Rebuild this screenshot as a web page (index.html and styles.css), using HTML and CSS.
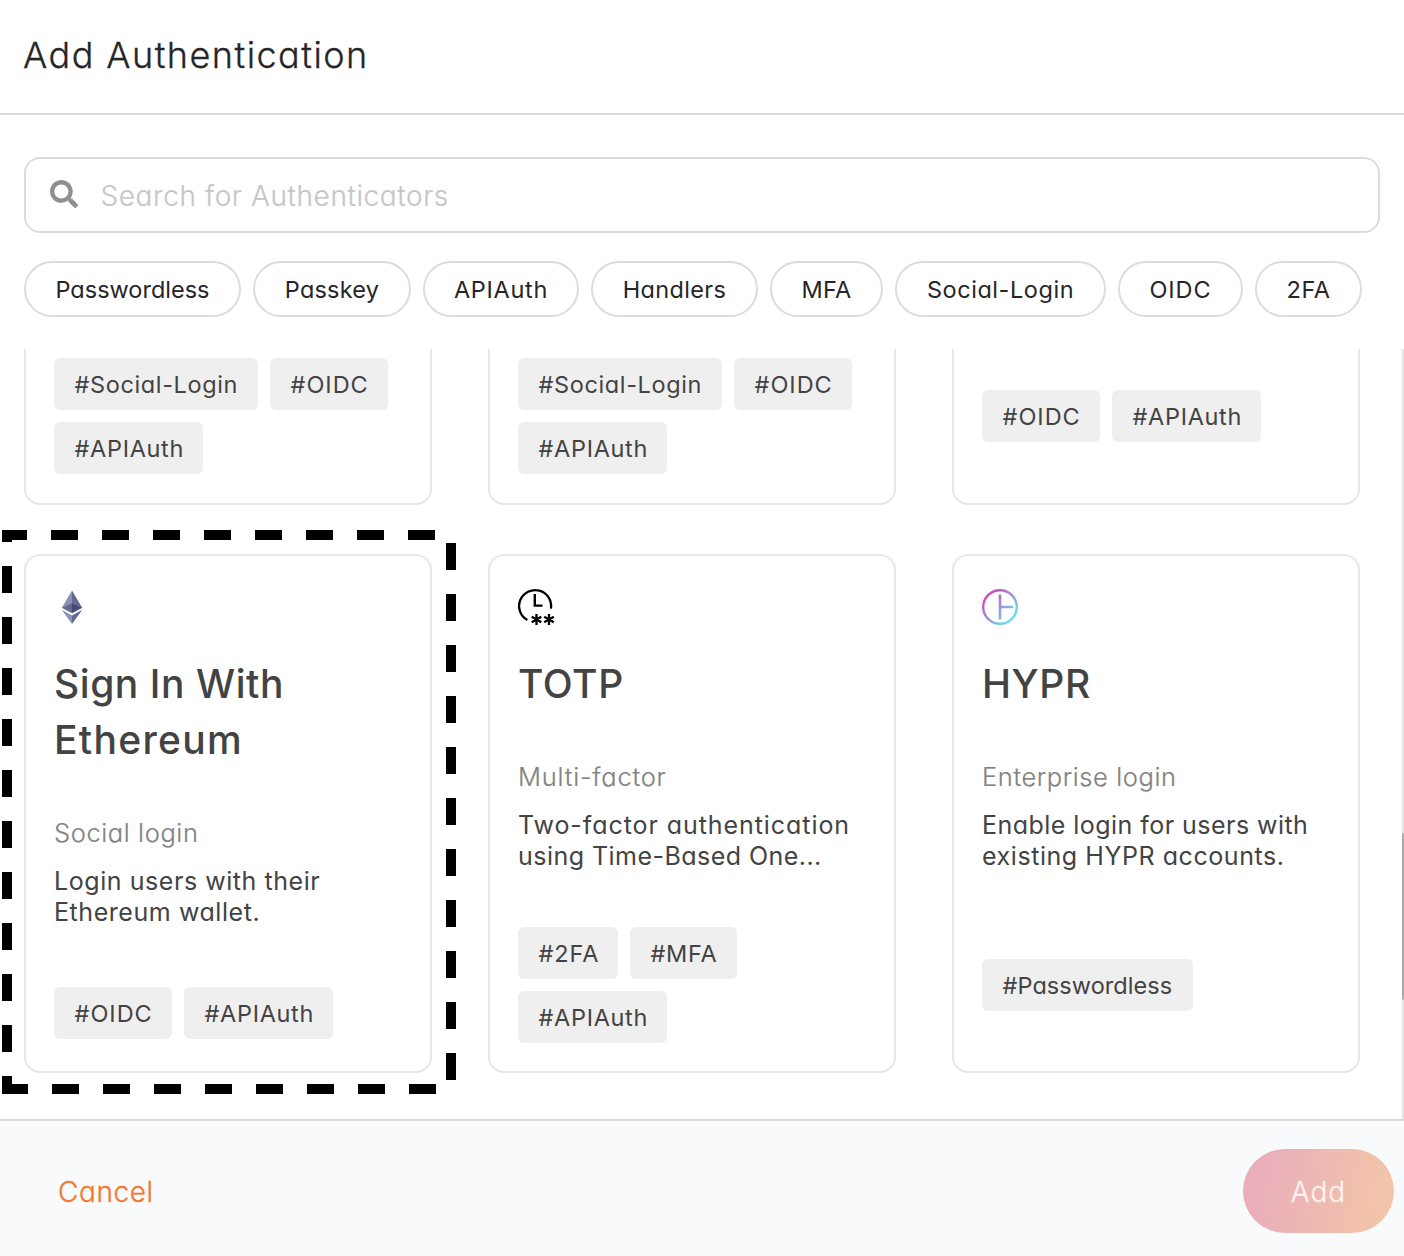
FILE: index.html
```
<!DOCTYPE html>
<html lang="en">
<head>
<meta charset="utf-8">
<title>Add Authentication</title>
<link rel="stylesheet" href="styles.css">
</head>
<body>
<div class="dialog">
  <header class="header"><h1 class="header-title">Add Authentication</h1></header>

  <div class="filters">
    <div class="search">
      <svg class="search-icon" viewBox="0 0 512 512"><path fill="#8f8f8f" d="M505 442.7L405.3 343c-4.5-4.5-10.6-7-17-7H372c27.6-35.3 44-79.7 44-128C416 93.1 322.9 0 208 0S0 93.1 0 208s93.1 208 208 208c48.3 0 92.7-16.4 128-44v16.3c0 6.4 2.5 12.5 7 17l99.7 99.7c9.4 9.4 24.6 9.4 33.9 0l28.3-28.3c9.4-9.4 9.4-24.6.1-34zM208 336c-70.7 0-128-57.2-128-128 0-70.7 57.2-128 128-128 70.7 0 128 57.2 128 128 0 70.7-57.2 128-128 128z"/></svg>
      <span class="search-placeholder">Search for Authenticators</span>
    </div>
    <div class="pills">
      <span class="pill pill-passwordless">Passwordless</span>
      <span class="pill pill-passkey">Passkey</span>
      <span class="pill pill-apiauth">APIAuth</span>
      <span class="pill pill-handlers">Handlers</span>
      <span class="pill pill-mfa">MFA</span>
      <span class="pill pill-social">Social-Login</span>
      <span class="pill pill-oidc">OIDC</span>
      <span class="pill pill-2fa">2FA</span>
    </div>
  </div>

  <main class="list">
    <div class="grid">
      <article class="card card-cut">
        <div class="tags">
          <span class="tag tag-social">#Social-Login</span>
          <span class="tag tag-oidc">#OIDC</span>
          <span class="tag tag-apiauth">#APIAuth</span>
        </div>
      </article>
      <article class="card card-cut">
        <div class="tags">
          <span class="tag tag-social">#Social-Login</span>
          <span class="tag tag-oidc">#OIDC</span>
          <span class="tag tag-apiauth">#APIAuth</span>
        </div>
      </article>
      <article class="card card-cut">
        <div class="tags">
          <span class="tag tag-oidc">#OIDC</span>
          <span class="tag tag-apiauth">#APIAuth</span>
        </div>
      </article>

      <article class="card card-highlighted">
        <svg class="highlight" viewBox="0 0 454 564" fill="none" stroke="#000" stroke-width="10">
          <path d="M0 5H25M49 5H434" stroke-dasharray="27 24"/>
          <path d="M449 13V550" stroke-dasharray="27 24"/>
          <path d="M0 559H26M50 559H434" stroke-dasharray="27 24"/>
          <path d="M5 0V12M5 36V564" stroke-dasharray="27 24"/>
        </svg>
        <svg class="icon" viewBox="0 0 36 36">
          <path fill="#8a92b2" d="M18 1.5L7.7 19 18 13.8z"/>
          <path fill="#62688f" d="M18 1.5L28.3 19 18 13.8z"/>
          <path fill="#62688f" d="M18 13.8L7.7 18.7 18 24.3z"/>
          <path fill="#454a75" d="M18 13.8L28.3 18.7 18 24.3z"/>
          <path fill="#8a92b2" d="M7.7 20.8L18 26.6V35z"/>
          <path fill="#62688f" d="M28.3 20.8L18 26.6V35z"/>
        </svg>
        <h2 class="title">Sign In With<br><span class="wide">Ethereum</span></h2>
        <p class="category">Social login</p>
        <p class="desc">Login users with their<br>Ethereum wallet.</p>
        <div class="tags">
          <span class="tag tag-oidc">#OIDC</span>
          <span class="tag tag-apiauth">#APIAuth</span>
        </div>
      </article>

      <article class="card">
        <svg class="icon" viewBox="0 0 36 36" fill="none" stroke="#000">
          <path stroke-width="2.3" d="M32.9 19.6A16 16 0 1 0 9.4 31.1"/>
          <path stroke-width="2.4" d="M16.8 5V16.6H24.5"/>
          <path stroke-width="2.3" d="M18.5 25v11M13.7 27.7l9.6 5.6M13.7 33.3l9.6-5.6M31 25v11M26.2 27.7l9.6 5.6M26.2 33.3l9.6-5.6"/>
        </svg>
        <h2 class="title">TOTP</h2>
        <p class="category category-factor">Multi-factor</p>
        <p class="desc"><span class="desc-wide">Two-factor authentication</span><br><span class="desc-tight">using Time-Based One...</span></p>
        <div class="tags">
          <span class="tag tag-2fa">#2FA</span>
          <span class="tag tag-mfa">#MFA</span>
          <span class="tag tag-apiauth">#APIAuth</span>
        </div>
      </article>

      <article class="card">
        <svg class="icon" viewBox="0 0 36 36" fill="none" stroke="url(#hypr)">
          <defs><linearGradient id="hypr" gradientUnits="userSpaceOnUse" x1="4" y1="4" x2="31" y2="31"><stop offset="0" stop-color="#d63fb4"/><stop offset="1" stop-color="#62e6f2"/></linearGradient></defs>
          <circle cx="18" cy="18" r="16.8" stroke-width="2.4"/>
          <path stroke-width="2.6" d="M18 5.5V30.5M18 18H31"/>
        </svg>
        <h2 class="title">HYPR</h2>
        <p class="category">Enterprise login</p>
        <p class="desc"><span class="desc-tight">Enable login for users with</span><br>existing HYPR accounts.</p>
        <div class="tags">
          <span class="tag tag-passwordless">#Passwordless</span>
        </div>
      </article>
    </div>
    <div class="scrollbar"><div class="scrollbar-thumb"></div></div>
  </main>

  <footer class="footer">
    <span class="cancel">Cancel</span>
    <span class="add">Add</span>
  </footer>
</div>
</body>
</html>
```
FILE: styles.css
```
* { box-sizing: border-box; }

body {
  margin: 0;
  background: #fff;
  color: #262626;
  font-family: Inter, "Liberation Sans", sans-serif;
  font-feature-settings: "cv11";
}

h1, h2, p { margin: 0; }

.dialog {
  display: flex;
  flex-direction: column;
  width: 1404px;
  height: 1256px;
  overflow: hidden;
}

.header {
  height: 115px;
  padding: 27px 23px 0;
  border-bottom: 2px solid #dcdcdc;
}

.header-title {
  font-size: 36px;
  font-weight: 300;
  line-height: 56px;
  letter-spacing: 1.45px;
  -webkit-text-stroke: 0.3px #262626;
}

.filters {
  height: 234px;
  padding: 42px 24px 0;
}

.search {
  display: flex;
  align-items: center;
  height: 76px;
  padding-left: 23.5px;
  border: 2px solid #dcdcdc;
  border-radius: 16px;
}

.search-icon {
  width: 28px;
  height: 28px;
  margin-bottom: 2px;
}

.search-placeholder {
  margin-left: 23px;
  padding-top: 2px;
  color: #c6c6c6;
  font-size: 28px;
  font-weight: 300;
  letter-spacing: 0.6px;
  -webkit-text-stroke: 0.2px #c6c6c6;
}

.pills {
  display: flex;
  gap: 12px;
  margin-top: 28px;
}

.pill {
  display: flex;
  align-items: center;
  justify-content: center;
  height: 56px;
  border: 2px solid #dcdcdc;
  border-radius: 28px;
  font-size: 23.5px;
  font-weight: 400;
}

.pill-passwordless { width: 217px; letter-spacing: 0; }
.pill-passkey { width: 158px; letter-spacing: 0.2px; }
.pill-apiauth { width: 156px; letter-spacing: 0.7px; }
.pill-handlers { width: 167px; letter-spacing: 0.35px; }
.pill-mfa { width: 113px; letter-spacing: 0.3px; }
.pill-social { width: 211px; letter-spacing: 0.55px; }
.pill-oidc { width: 125px; letter-spacing: 0.9px; }
.pill-2fa { width: 107px; letter-spacing: 0.5px; }

.list {
  display: flex;
  justify-content: space-between;
  height: 770px;
  padding-left: 24px;
  overflow: hidden;
}

.grid {
  display: grid;
  grid-template-columns: repeat(3, 408px);
  grid-template-rows: 156px 519px;
  gap: 49px 56px;
}

.card {
  display: flex;
  flex-direction: column;
  padding: 33px 28px 28px;
  border: 2px solid #e7e7e7;
  border-radius: 16px;
  color: #434343;
}

.card-cut {
  padding-top: 9px;
  padding-bottom: 29px;
  border-top: 0;
  border-radius: 0 0 16px 16px;
}

.card-cut .tags { margin-top: 0; }

.card-highlighted { position: relative; }

.highlight {
  position: absolute;
  top: -26px;
  left: -24px;
  width: 454px;
  height: 564px;
}

.icon {
  width: 36px;
  height: 36px;
  overflow: visible;
}

.title {
  margin-top: 31px;
  font-size: 39px;
  font-weight: 500;
  line-height: 56px;
  letter-spacing: 0.56px;
}

.wide { letter-spacing: 1.3px; }

.category {
  margin-top: 49px;
  color: #828282;
  font-size: 25.5px;
  font-weight: 300;
  line-height: 32px;
  letter-spacing: 0.6px;
  -webkit-text-stroke: 0.2px #828282;
}

.category-factor { letter-spacing: 0.8px; }

.desc {
  margin-top: 17px;
  font-size: 25px;
  font-weight: 400;
  line-height: 31px;
  letter-spacing: 0.56px;
  white-space: nowrap;
}

.desc-wide { letter-spacing: 0.93px; }
.desc-tight { letter-spacing: 0.46px; }

.tags {
  display: flex;
  flex: 1;
  flex-wrap: wrap;
  align-content: center;
  gap: 12px;
  margin-top: 55px;
}

.tag {
  display: flex;
  align-items: center;
  height: 52px;
  padding-left: 20.5px;
  border-radius: 6px;
  background: #efefef;
  font-size: 23.5px;
  font-weight: 400;
}

.tag-social { width: 204px; letter-spacing: 0.63px; }
.tag-oidc { width: 118px; letter-spacing: 1px; }
.tag-apiauth { width: 149.4px; letter-spacing: 0.68px; }
.tag-2fa { width: 100px; letter-spacing: 0.9px; }
.tag-mfa { width: 107px; letter-spacing: 0.7px; }
.tag-passwordless { width: 211px; letter-spacing: 0.06px; }

.scrollbar {
  width: 2px;
  padding-top: 484px;
  background: #e4e4e4;
}

.scrollbar-thumb {
  height: 167px;
  border-radius: 2px 0 0 2px;
  background: #a9a9a9;
}

.footer {
  display: flex;
  align-items: flex-start;
  justify-content: space-between;
  height: 137px;
  padding: 28px 10px 0 58px;
  border-top: 2px solid #dadada;
  background: #f8fafc;
  font-size: 28px;
  font-weight: 300;
  line-height: 87px;
}

.cancel {
  color: #f2792b;
  letter-spacing: 0.6px;
  -webkit-text-stroke: 0.3px #f2792b;
}

.add {
  width: 151px;
  height: 84px;
  border-radius: 42px;
  background: linear-gradient(100deg, #eaaebb 12%, #f2c4a9 90%);
  color: #fdf3f0;
  letter-spacing: 1px;
  text-align: center;
  -webkit-text-stroke: 0.3px #fdf3f0;
}
```
